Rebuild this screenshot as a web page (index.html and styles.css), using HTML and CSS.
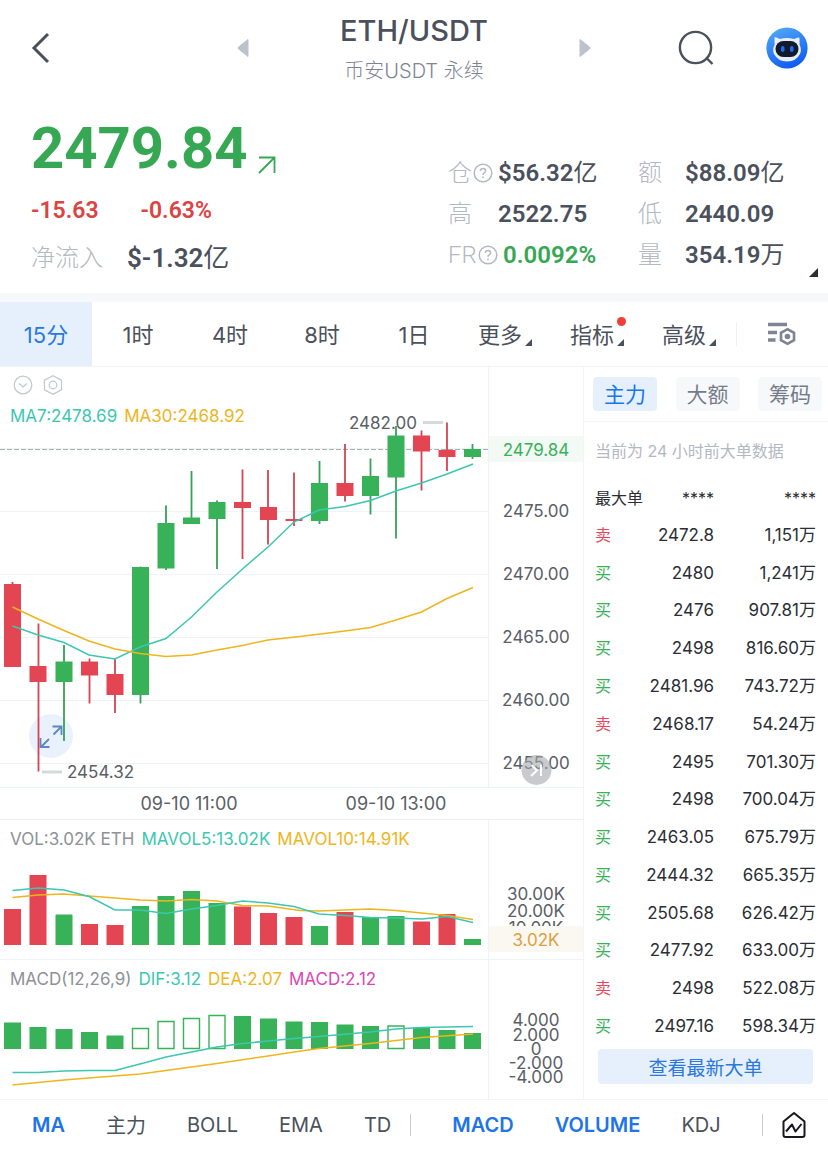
FILE: index.html
```html
<!DOCTYPE html>
<html lang="zh-CN">
<head>
    <meta charset="UTF-8">
    <meta name="viewport" content="width=device-width, initial-scale=1.0">
    <title>ETH/USDT</title>
    <link rel="stylesheet" href="styles.css">
</head>
<body>
    <!-- Header -->
    <header class="header">
        <button class="icon-btn back" aria-label="返回">
            <svg width="20" height="32" viewBox="0 0 20 32"><path d="M17 2 L3 16 L17 30" fill="none" stroke="#4b515c" stroke-width="3"/></svg>
        </button>
        <div class="pair">
            <button class="icon-btn" aria-label="上一个">
                <svg width="12" height="20" viewBox="0 0 12 20"><path d="M11 1.5 V18.5 L1.5 11 Q.5 10 1.5 9 Z" fill="#bcc2cc" stroke="#bcc2cc" stroke-linejoin="round"/></svg>
            </button>
            <div class="pair-name">
                <h1>ETH/USDT</h1>
                <p>币安USDT 永续</p>
            </div>
            <button class="icon-btn" aria-label="下一个">
                <svg width="12" height="20" viewBox="0 0 12 20"><path d="M1 1.5 V18.5 L10.5 11 Q11.5 10 10.5 9 Z" fill="#bcc2cc" stroke="#bcc2cc" stroke-linejoin="round"/></svg>
            </button>
        </div>
        <div class="header-actions">
            <button class="icon-btn" aria-label="搜索">
                <svg width="36" height="36" viewBox="0 0 36 36" fill="none" stroke="#4b515c" stroke-width="2.4"><circle cx="17.5" cy="17.5" r="15.6"/><path d="M28 27.5 L34.5 34"/></svg>
            </button>
            <button class="icon-btn" aria-label="助手">
                <svg width="42" height="42" viewBox="0 0 42 42">
                    <defs>
                        <linearGradient id="bot" x1="0" y1="0" x2="0.4" y2="1">
                            <stop offset="0" stop-color="#55aef8"/>
                            <stop offset="1" stop-color="#1260f2"/>
                        </linearGradient>
                    </defs>
                    <circle cx="21" cy="21" r="20.6" fill="url(#bot)"/>
                    <path d="M8.5 10.5 Q9 9.5 10.5 10.5 L14 12 Q21 10 28 12 L32 10.5 Q33.5 10 33.5 11.5 L33.6 18 Q36 22 34 27 Q30 34.5 21 34.5 Q12 34.5 8 27 Q6 22 8.6 18 Z" fill="#e9edf5"/>
                    <rect x="9.5" y="14" width="23" height="16" rx="8" fill="#121a2b"/>
                    <rect x="15" y="19" width="3.5" height="6" rx="1.7" fill="#1f6df5"/>
                    <rect x="24" y="19" width="3.5" height="6" rx="1.7" fill="#1f6df5"/>
                </svg>
            </button>
        </div>
    </header>

    <!-- Price summary -->
    <section class="summary">
        <div class="quote">
            <div class="price">2479.84
                <svg width="18" height="18" viewBox="0 0 18 18" fill="none" stroke="#36a853" stroke-width="1.8"><path d="M1 1.5 H16.5 V17 M16.5 1.5 L1 17"/></svg>
            </div>
            <div class="change"><span>-15.63</span><span>-0.63%</span></div>
            <div class="inflow"><span class="label">净流入</span><b>$-1.32<i>亿</i></b></div>
        </div>
        <div class="stats">
            <div class="stat"><span class="label">仓<svg class="help" viewBox="0 0 20 20"><circle cx="10" cy="10" r="8.8"/><path d="M7.4 8 Q7.4 5.4 10 5.4 Q12.6 5.4 12.6 7.8 Q12.6 9 11.2 9.8 Q10 10.5 10 12 M10 13.6 V15.2"/></svg></span><b>$56.32<i>亿</i></b></div>
            <div class="stat"><span class="label">额</span><b>$88.09<i>亿</i></b></div>
            <div class="stat"><span class="label">高</span><b>2522.75</b></div>
            <div class="stat"><span class="label">低</span><b>2440.09</b></div>
            <div class="stat"><span class="label fr">FR<svg class="help" viewBox="0 0 20 20"><circle cx="10" cy="10" r="8.8"/><path d="M7.4 8 Q7.4 5.4 10 5.4 Q12.6 5.4 12.6 7.8 Q12.6 9 11.2 9.8 Q10 10.5 10 12 M10 13.6 V15.2"/></svg></span><b class="up">0.0092%</b></div>
            <div class="stat"><span class="label">量</span><b>354.19<i>万</i></b></div>
        </div>
        <span class="corner"></span>
    </section>

    <!-- Period tabs -->
    <nav class="periods">
        <button class="active">15分</button>
        <button>1时</button>
        <button>4时</button>
        <button>8时</button>
        <button>1日</button>
        <button class="more">更多</button>
        <button class="more dot">指标</button>
        <button class="more">高级</button>
        <button class="settings" aria-label="设置">
            <svg width="28" height="24" viewBox="0 0 28 24"><path d="M0 2.5 H19 M0 10.5 H9 M0 18 H7.5" stroke="#7d8494" stroke-width="3.4"/><path d="M19.5 7.2 L26 10.8 V18.2 L19.5 21.8 L13 18.2 V10.8 Z" fill="none" stroke="#7d8494" stroke-width="2.6"/><circle cx="19.5" cy="14.5" r="2.8" fill="#7d8494"/></svg>
        </button>
    </nav>

    <main class="main">
        <div class="charts">
            <!-- Candles -->
            <div class="chart">
                <svg viewBox="0 367 583 420">
                    <path class="grid" d="M0 448.5 H488 M0 511.5 H488 M0 574.5 H488 M0 637.5 H488 M0 700.5 H488 M0 763.5 H488 M488.5 367 V787"/>
                    <path d="M0 449.5 H488" stroke="#a9b0ac" stroke-dasharray="5 2"/>
                    <circle cx="51" cy="736" r="22" fill="#e9f1fd"/>
                    <path d="M52.5 726.5 H61.5 V735 M61.5 726.5 L53.5 734.5 M49 739 L41 747 M40.5 738 V747 H49.5" fill="none" stroke="#5d86c4" stroke-width="1.8"/>
                    <text x="349" y="429">2482.00</text>
                    <path class="wick-down" d="M12.5 582 V584 M38.5 623.5 V771.5 M89.5 658.5 V703.5 M115 658 V713 M242.5 469.5 V559 M268 470 V544.5 M294 472.5 V526 M345 444 V501.5 M421.5 430.5 V490.5 M447 422.5 V471"/>
                    <path class="wick-up" d="M64 645 V741 M140.5 566.5 V703.5 M166 505.5 V570 M191.5 471 V524 M217 500.5 V569 M319.5 461 V524 M370.5 458.5 V514.5 M396 426 V538.5 M472.5 444 V459"/>
                    <path class="down" d="M4 584h17v83h-17z M29.5 666h17v16h-17z M81 661.5h17v14h-17z M106.5 674h17v21h-17z M234 502h17v6h-17z M260 507h17v13h-17z M285.5 519h17v2h-17z M336.5 483h17v13h-17z M413 435.5h17v16h-17z M438.5 450h17v7h-17z"/>
                    <path class="up-bar" d="M55.5 661.5h17v20.5h-17z M132 567h17v128h-17z M157.5 523h17v45.5h-17z M183 517.5h17v6.5h-17z M208.5 502h17v17h-17z M311 483h17v38h-17z M362 476h17v20h-17z M387.5 435.5h17v42h-17z M464 449h17v8h-17z"/>
                    <polyline class="teal" points="12.5,626 38,635 64,642.5 89,655 115,659 140,647 166,638.5 191.5,617 217,592 242.5,569 268,547 294,522 319,510 345,506.5 370.5,500.5 396,491 421.5,483 447,474 473,464"/>
                    <polyline class="gold" points="12.5,607 38,619 64,630.5 89,641 115,649 140,653.5 166,656.5 191.5,655 217,650 242.5,645.5 268,640 300,636.5 345,631 370.5,627.5 396,620 421.5,612 447,598.5 473,587.5"/>
                    <path d="M423 422.5 H443 M42 772 H62" stroke="#d6d8da" stroke-width="3"/>
                    <text x="67" y="778">2454.32</text>
                    <text x="10" y="422"><tspan class="t-teal">MA7:2478.69</tspan><tspan class="t-gold" dx="7">MA30:2468.92</tspan></text>
                    <rect x="489" y="436" width="94" height="26" fill="#f3f9f5"/>
                    <g class="axis">
                        <text class="t-up" x="536" y="456">2479.84</text>
                        <text x="536" y="517">2475.00</text>
                        <text x="536" y="580">2470.00</text>
                        <text x="536" y="643">2465.00</text>
                        <text x="536" y="706">2460.00</text>
                        <text x="536" y="769">2455.00</text>
                    </g>
                    <circle cx="536.5" cy="770" r="15" fill="#a5a7ad" fill-opacity=".6"/>
                    <path d="M531.5 765 L537 770.5 L531 776 M541 764.5 V776" fill="none" stroke="#fff" stroke-width="2"/>
                </svg>
                <div class="chart-tools">
                    <button class="icon-btn" aria-label="收起"><svg width="20" height="20" viewBox="0 0 20 20" fill="none" stroke="#c3c6cc" stroke-width="1.2"><circle cx="10" cy="10" r="8.8"/><path d="M6 8.5 L10 12 L14 8.5"/></svg></button>
                    <button class="icon-btn" aria-label="指标设置"><svg width="20" height="20" viewBox="0 0 20 20" fill="none" stroke="#c3c6cc" stroke-width="1.2"><path d="M10 .8 L18.5 5.2 V14.8 L10 19.2 L1.5 14.8 V5.2 Z"/><circle cx="10" cy="10" r="3.8"/></svg></button>
                </div>
            </div>

            <div class="times"><span>09-10 11:00</span><span>09-10 13:00</span></div>

            <!-- Volume -->
            <div class="chart">
                <svg viewBox="0 820 583 139">
                    <path class="grid" d="M488.5 820 V959"/>
                    <text x="10" y="845"><tspan class="t-gray">VOL:3.02K ETH</tspan><tspan class="t-teal" dx="7">MAVOL5:13.02K</tspan><tspan class="t-gold" dx="7">MAVOL10:14.91K</tspan></text>
                    <path class="down" d="M4 945v-36h17v36z M29.5 945v-70h17v70z M81 945v-21h17v21z M106.5 945v-20h17v20z M234 945v-38.5h17v38.5z M260 945v-32h17v32z M285.5 945v-28h17v28z M336.5 945v-33h17v33z M413 945v-23.5h17v23.5z M438.5 945v-31h17v31z"/>
                    <path class="up-bar" d="M55.5 945v-30.5h17v30.5z M132 945v-39h17v39z M157.5 945v-49h17v49z M183 945v-54h17v54z M208.5 945v-42h17v42z M311 945v-19h17v19z M362 945v-28h17v28z M387.5 945v-29h17v29z M464 945v-6h17v6z"/>
                    <polyline class="gold" points="12.5,897.5 38,895 64,894 89,896 115,898 140,900 166,901 191.5,899.5 217,901 242.5,905.5 268,906 300,910.5 319,911 345,910 370,909 396,910.5 447,915.5 473,919.5"/>
                    <polyline class="teal" points="12.5,890.5 38,888 64,890 89,896.5 115,910 140,910 166,913.5 191.5,909 217,905.5 242.5,901 268,903 294,906.5 319,914 345,915.5 370,917.5 396,918 421.5,919 447,916.5 473,922.5"/>
                    <g class="axis">
                        <text x="536" y="900">30.00K</text>
                        <text x="536" y="917">20.00K</text>
                        <text x="536" y="934">10.00K</text>
                        <rect x="489" y="926" width="94" height="26" fill="#fbf8f2"/>
                        <text class="t-tag" x="536" y="946">3.02K</text>
                    </g>
                </svg>
            </div>

            <!-- MACD -->
            <div class="chart">
                <svg viewBox="0 960 583 139">
                    <path class="grid" d="M488.5 960 V1099"/>
                    <text x="10" y="985"><tspan class="t-gray">MACD(12,26,9)</tspan><tspan class="t-teal" dx="7">DIF:3.12</tspan><tspan class="t-gold" dx="7">DEA:2.07</tspan><tspan class="t-pink" dx="7">MACD:2.12</tspan></text>
                    <path class="up-bar" d="M4 1049v-26.5h17v26.5z M29.5 1049v-22h17v22z M55.5 1049v-20h17v20z M81 1049v-17h17v17z M106.5 1049v-13.5h17v13.5z M234 1049v-33h17v33z M260 1049v-30.5h17v30.5z M285.5 1049v-27.5h17v27.5z M311 1049v-27h17v27z M336.5 1049v-24.5h17v24.5z M362 1049v-23h17v23z M413 1049v-21.5h17v21.5z M438.5 1049v-19h17v19z M464 1049v-16h17v16z"/>
                    <path class="hollow" d="M132.5 1048.5v-20h16v20z M158 1048.5v-27h16v27z M183.5 1048.5v-30h16v30z M209 1048.5v-33h16v33z M388 1048.5v-22.5h16v22.5z"/>
                    <polyline class="teal" points="12.5,1072.5 38,1072.5 64,1071 89,1070.5 115,1070.5 140,1064 166,1057 191.5,1052 217,1047 242.5,1043.5 268,1041 294,1038.5 319,1036.5 370,1032 396,1029 421.5,1027.5 473,1026.5"/>
                    <polyline class="gold" points="12.5,1085 38,1082.5 64,1080 89,1078 140,1074 166,1070.5 217,1063.5 268,1056 294,1052 319,1048.5 370,1043.5 396,1040.5 421.5,1037.5 473,1034"/>
                    <g class="axis">
                        <text x="536" y="1026">4.000</text>
                        <text x="536" y="1041">2.000</text>
                        <text x="536" y="1055">0</text>
                        <text x="536" y="1069">-2.000</text>
                        <text x="536" y="1083">-4.000</text>
                    </g>
                </svg>
            </div>
        </div>

        <!-- Big orders -->
        <aside class="orders">
            <div class="order-tabs">
                <button class="active">主力</button>
                <button>大额</button>
                <button>筹码</button>
            </div>
            <p class="note">当前为 24 小时前大单数据</p>
            <table>
                <thead><tr><th>最大单</th><th>****</th><th>****</th></tr></thead>
                <tbody>
                    <tr><td class="sell">卖</td><td>2472.8</td><td>1,151万</td></tr>
                    <tr><td class="buy">买</td><td>2480</td><td>1,241万</td></tr>
                    <tr><td class="buy">买</td><td>2476</td><td>907.81万</td></tr>
                    <tr><td class="buy">买</td><td>2498</td><td>816.60万</td></tr>
                    <tr><td class="buy">买</td><td>2481.96</td><td>743.72万</td></tr>
                    <tr><td class="sell">卖</td><td>2468.17</td><td>54.24万</td></tr>
                    <tr><td class="buy">买</td><td>2495</td><td>701.30万</td></tr>
                    <tr><td class="buy">买</td><td>2498</td><td>700.04万</td></tr>
                    <tr><td class="buy">买</td><td>2463.05</td><td>675.79万</td></tr>
                    <tr><td class="buy">买</td><td>2444.32</td><td>665.35万</td></tr>
                    <tr><td class="buy">买</td><td>2505.68</td><td>626.42万</td></tr>
                    <tr><td class="buy">买</td><td>2477.92</td><td>633.00万</td></tr>
                    <tr><td class="sell">卖</td><td>2498</td><td>522.08万</td></tr>
                    <tr><td class="buy">买</td><td>2497.16</td><td>598.34万</td></tr>
                </tbody>
            </table>
            <button class="latest">查看最新大单</button>
        </aside>
    </main>

    <!-- Indicator bar -->
    <nav class="indicators">
        <button class="active">MA</button>
        <button>主力</button>
        <button>BOLL</button>
        <button>EMA</button>
        <button>TD</button>
        <span class="divider"></span>
        <button class="active">MACD</button>
        <button class="active">VOLUME</button>
        <button>KDJ</button>
        <span class="divider last"></span>
        <button class="home" aria-label="图表">
            <svg width="24" height="28" viewBox="0 0 24 28" fill="none" stroke="#16181d" stroke-width="2" stroke-linejoin="round"><path d="M12 2 L22.5 10.5 V24 Q22.5 26 20.5 26 H3.5 Q1.5 26 1.5 24 V10.5 Z"/><path d="M4 20.5 L10 13.5 L13.5 20.5 L19.5 13"/></svg>
        </button>
    </nav>
</body>
</html>
```
FILE: styles.css
```css
* { margin: 0; padding: 0; box-sizing: border-box; }
body { background: #fff; color: #4b515c; font-family: Inter, "Noto Sans CJK SC", sans-serif; font-size: 16px; }
button { border: none; background: none; font: inherit; color: inherit; white-space: nowrap; cursor: pointer; }
svg { display: block; }
i { font-style: normal; font-weight: 400; }

/* Header */
.header { display: grid; grid-template-columns: 1fr 354px 1fr; align-items: center; height: 96px; padding: 0 20px; }
.icon-btn { display: flex; align-items: center; justify-content: center; }
.back { justify-self: start; margin-left: 11px; }
.pair { display: flex; align-items: center; justify-content: space-between; }
.pair-name { padding-top: 6px; text-align: center; }
.pair-name h1 { font-size: 29px; line-height: 40px; font-weight: 500; }
.pair-name p { font-size: 20px; line-height: 40px; color: #7d8494; font-weight: 300; }
.header-actions { display: flex; align-items: center; justify-content: flex-end; gap: 52px; }

/* Price summary */
.summary { position: relative; display: flex; justify-content: space-between; height: 206px; padding: 20px 44px 0 31px; border-bottom: 9px solid #f6f8fa; font-family: Roboto, "Noto Sans CJK SC", sans-serif; }
.price { display: flex; align-items: flex-end; gap: 11px; height: 64px; font-size: 58px; line-height: 64px; font-weight: 700; color: #36a853; }
.price svg { margin-bottom: 6px; }
.change { display: flex; gap: 42px; margin-top: 17px; font-size: 23px; line-height: 28px; font-weight: 600; color: #dc4343; }
.inflow { display: flex; align-items: center; gap: 24px; margin-top: 16px; font-size: 26px; line-height: 34px; }
.inflow b { font-weight: 600; }
.label { color: #b3b8c2; font-size: 24px; font-weight: 300; }
.stats { display: grid; grid-template-columns: 190px 146px; grid-auto-rows: 41px; align-content: start; padding-top: 36px; }
.stat { display: flex; align-items: center; line-height: 40px; }
.stat .label { display: flex; align-items: center; min-width: 50px; }
.stat:nth-child(even) .label { min-width: 47px; }
.stat .fr { min-width: 55px; }
.stat b { font-size: 24px; font-weight: 600; white-space: nowrap; }
.help { width: 20px; height: 20px; margin-left: 1px; fill: none; stroke: #b3b8c2; stroke-width: 1.5; }
.stat .up { color: #36a853; }
.corner { position: absolute; right: 10px; bottom: 16px; border-left: 9px solid transparent; border-bottom: 9px solid #2b2e35; }

/* Period tabs */
.periods { display: grid; grid-template-columns: repeat(9, 1fr); height: 65px; border-bottom: 1px solid #f2f4f6; font-size: 22px; }
.periods button { display: flex; align-items: center; justify-content: center; padding-bottom: 3px; }
.periods .active { background: #e6f0fc; color: #2a78e0; }
.periods .more { position: relative; padding-right: 12px; }
.more::after { content: ""; position: absolute; right: 20px; bottom: 20px; border-left: 7px solid transparent; border-bottom: 7px solid #4b515c; }
.dot::before { content: ""; position: absolute; right: 18px; top: 15px; width: 9px; height: 9px; border-radius: 50%; background: #ee4035; }
.periods .settings { justify-content: flex-start; padding-bottom: 0; }
.settings::before { content: ""; width: 1px; height: 24px; margin-right: 31px; background: #f0f1f4; }

/* Charts */
.main { display: grid; grid-template-columns: 583fr 245fr; border-bottom: 1px solid #f2f4f6; }
.chart { position: relative; border-bottom: 1px solid #edf3f6; }
.chart:last-child { border-bottom: none; }
.chart > svg { width: 100%; height: auto; font-size: 17px; }
.chart-tools { position: absolute; left: 13px; top: 8px; display: flex; gap: 10px; }
.chart text { fill: #5a5e66; }
.axis { text-anchor: middle; }
.grid { stroke: #eff3f6; fill: none; }
.down { fill: #e34652; }
.up-bar { fill: #37b259; }
.hollow { fill: #fff; stroke: #37b259; stroke-width: 1.4; }
.wick-down { stroke: #d44552; stroke-width: 1.8; }
.wick-up { stroke: #37a05a; stroke-width: 1.8; }
.teal, .gold { fill: none; stroke-width: 1.5; }
.teal { stroke: #3cc7b0; }
.gold { stroke: #eeb51c; }
.chart .t-teal { fill: #3cc7b0; }
.chart .t-gold { fill: #eeb51c; }
.chart .t-gray { fill: #8e9197; }
.chart .t-pink { fill: #dc45b4; }
.chart .t-up { fill: #37b259; }
.chart .t-tag { fill: #dfa03c; }
.times { display: flex; justify-content: center; gap: 108px; padding-left: 4px; font-size: 18px; line-height: 31px; color: #5a5e66; border-bottom: 1px solid #edf0f3; }

/* Big orders */
.orders { display: flex; flex-direction: column; border-left: 1px solid #f2f4f6; }
.order-tabs { display: flex; justify-content: space-between; padding: 10px 6px 10px 9px; border-bottom: 1px solid #f2f4f6; font-size: 21px; }
.order-tabs button { width: 64px; height: 34px; padding-bottom: 2px; border-radius: 4px; background: #f7f8fa; color: #747b8a; }
.order-tabs .active { background: #e6f0fc; color: #1677ee; }
.note { padding: 12px 0 11px 11px; font-size: 16px; line-height: 34px; color: #b3b8c2; white-space: nowrap; }
.orders table { height: 566px; margin: 0 12px 0 11px; border-collapse: collapse; color: #2b2e35; }
.orders th, .orders td { height: 37px; line-height: 24px; text-align: right; }
.orders th { font-size: 16px; font-weight: 400; }
.orders td { font-size: 17px; }
.orders th:first-child, .orders td:first-child { width: 50px; font-size: 16px; text-align: left; white-space: nowrap; }
.orders td:nth-child(2) { width: 69px; }
.orders .buy { color: #37b259; }
.orders .sell { color: #e8475c; }
.latest { margin: 4px 15px 14px 14px; height: 35px; border-radius: 4px; background: #e6f0fc; color: #2a78e0; font-size: 19px; }

/* Indicator bar */
.indicators { display: flex; align-items: center; gap: 41px; height: 49px; padding: 0 22px 0 32px; font-size: 20px; }
.indicators .active { color: #1f75e6; font-weight: 600; }
.divider { flex: none; width: 1px; height: 22px; margin-left: -22px; background: #c9cdd4; }
.last { margin: 0 -22px 0 auto; }
```
